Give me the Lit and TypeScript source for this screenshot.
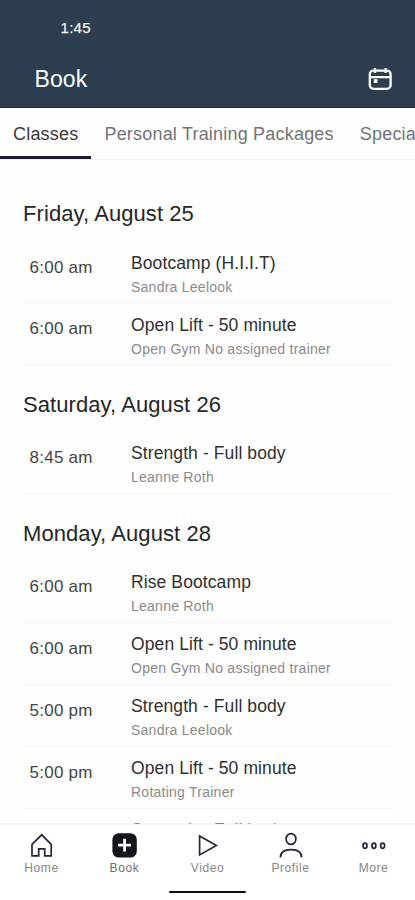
import { LitElement, html, css, svg } from "lit";
import { customElement, property } from "lit/decorators.js";
import { classMap } from "lit/directives/class-map.js";

type Row = { time: string; title: string; who: string };
type Day = { label: string; rows: Row[] };

const days: Day[] = [
  {
    label: "Friday, August 25",
    rows: [
      { time: "6:00 am", title: "Bootcamp (H.I.I.T)", who: "Sandra Leelook" },
      { time: "6:00 am", title: "Open Lift - 50 minute", who: "Open Gym No assigned trainer" },
    ],
  },
  {
    label: "Saturday, August 26",
    rows: [{ time: "8:45 am", title: "Strength - Full body", who: "Leanne Roth" }],
  },
  {
    label: "Monday, August 28",
    rows: [
      { time: "6:00 am", title: "Rise Bootcamp", who: "Leanne Roth" },
      { time: "6:00 am", title: "Open Lift - 50 minute", who: "Open Gym No assigned trainer" },
      { time: "5:00 pm", title: "Strength - Full body", who: "Sandra Leelook" },
      { time: "5:00 pm", title: "Open Lift - 50 minute", who: "Rotating Trainer" },
      { time: "", title: "Strength - Full body", who: "" },
    ],
  },
];

const icons = {
  Home: svg`<path d="M4 12.4 13.7 2.8 23.2 12.4V23.8H16.7V16.8H10.7V23.8H4Z"/>`,
  Book: svg`<rect class="solid" x="1.4" y="1.2" width="24.4" height="24.4" rx="6.4"/><path class="plus" d="M13.6 6.8V19.6M7.2 13.2H20"/>`,
  Video: svg`<path d="M5.6 3.9V22.9L22.4 13.4Z"/>`,
  Profile: svg`<ellipse cx="14" cy="7" rx="4.9" ry="5.4"/><path d="M3.4 25.4C3.4 19.8 7.6 17.6 14 17.6S24.6 19.8 24.6 25.4"/>`,
  More: svg`<ellipse cx="5" cy="13.8" rx="2" ry="2.6"/><ellipse cx="13.9" cy="13.8" rx="2" ry="2.6"/><ellipse cx="22.6" cy="13.8" rx="2" ry="2.6"/>`,
};

@customElement("class-row")
class ClassRow extends LitElement {
  @property({ attribute: false }) row!: Row;
  static styles = css`
    :host {
      display: grid;
      grid-template-columns: 108px 1fr;
      height: 61.95px;
      box-sizing: border-box;
      border-bottom: 1px solid #f4f4f4;
      white-space: nowrap;
    }
    .time {
      padding: 16.5px 0 0 6.5px;
      font-size: 17px;
      line-height: 20px;
      letter-spacing: 0.25px;
      color: #444;
    }
    .title {
      padding-top: 11.62px;
      font-size: 17.5px;
      line-height: 20px;
      letter-spacing: 0.1px;
      color: #303030;
    }
    .who {
      padding-top: 5px;
      font-size: 14px;
      line-height: 18px;
      letter-spacing: 0.25px;
      color: #8a8a8a;
    }
  `;
  render() {
    return html`<div class="time">${this.row.time}</div>
      <div>
        <div class="title">${this.row.title}</div>
        <div class="who">${this.row.who}</div>
      </div>`;
  }
}

@customElement("app-root")
class AppRoot extends LitElement {
  static styles = css`
    :host {
      display: flex;
      flex-direction: column;
      height: 900px;
      overflow: hidden;
      background: #fefefe;
      font-family: "Liberation Sans", Arial, sans-serif;
      white-space: nowrap;
    }
    svg {
      display: block;
      fill: none;
    }
    header {
      flex: none;
      height: 108px;
      box-sizing: border-box;
      background: #2c3e50;
      border-bottom: 1px solid #1c3045;
      color: #fff;
    }
    .status {
      padding: 19px 0 0 60.5px;
      font-size: 15px;
      line-height: 18px;
      letter-spacing: 0.3px;
      color: #f0f2f4;
      -webkit-text-stroke: 0.25px #f0f2f4;
    }
    .bar {
      display: flex;
      justify-content: space-between;
      align-items: center;
      height: 30px;
      padding: 27px 22px 0 34.5px;
    }
    .name {
      font-size: 23px;
      letter-spacing: 0.1px;
    }
    .cal {
      stroke: #fff;
      stroke-width: 2.3;
    }
    .dot {
      fill: #fff;
      stroke: none;
    }
    .tabs {
      flex: none;
      display: flex;
      height: 52px;
      box-sizing: border-box;
      border-bottom: 1px solid #f1f1f1;
      overflow: hidden;
    }
    .tab {
      flex: none;
      height: 51px;
      box-sizing: border-box;
      padding: 0 13px;
      font-size: 18px;
      line-height: 52px;
      letter-spacing: 0.2px;
      color: #737376;
    }
    .active {
      color: #3a3a3a;
      border-bottom: 3px solid #1c1b33;
    }
    main {
      flex: 1;
      min-height: 0;
      overflow: hidden;
      padding: 14px 23px 0;
    }
    .day {
      height: 67px;
      box-sizing: border-box;
      padding-top: 27px;
      font-size: 22px;
      line-height: 26px;
      letter-spacing: 0.08px;
      color: #262626;
    }
    nav {
      position: relative;
      flex: none;
      display: grid;
      grid-template-columns: repeat(5, 1fr);
      height: 66px;
      margin-top: -1px;
      box-sizing: border-box;
      padding-top: 8px;
      border-top: 1px solid rgba(235, 235, 235, 0.45);
      background: #fff;
      background-clip: padding-box;
      box-shadow: inset 0 1px #f5f5f5;
    }
    .item {
      display: flex;
      flex-direction: column;
      align-items: center;
      gap: 2px;
      font-size: 12px;
      line-height: 14px;
      letter-spacing: 0.6px;
      color: #868686;
    }
    .item svg {
      stroke: #26263a;
      stroke-width: 1.7;
    }
    .current {
      color: #707070;
    }
    .item .solid {
      fill: #15161c;
      stroke: none;
    }
    .item .plus {
      stroke: #fff;
      stroke-width: 2.8;
    }
    .home {
      flex: none;
      display: flex;
      justify-content: center;
      height: 11px;
      background: #fff;
    }
    .home::after {
      content: "";
      width: 77px;
      height: 2px;
      margin-top: 2px;
      border-radius: 1px;
      background: #111;
    }
  `;

  render() {
    return html`
      <header>
        <div class="status">1:45</div>
        <div class="bar">
          <span class="name">Book</span>
          <svg class="cal" width="26" height="26" viewBox="0 0 26 26">
            <rect x="2.8" y="4.6" width="20.8" height="18.2" rx="3.6" />
            <path d="M2.8 11.2H23.6M8 2V7M18.6 2V7" />
            <rect class="dot" x="6.8" y="13.2" width="3.6" height="3.8" />
          </svg>
        </div>
      </header>
      <div class="tabs">
        <div class="tab active">Classes</div>
        <div class="tab">Personal Training Packages</div>
        <div class="tab">Specials</div>
      </div>
      <main>
        ${days.map(
          (d) => html`<section>
            <div class="day">${d.label}</div>
            ${d.rows.map((r) => html`<class-row .row=${r}></class-row>`)}
          </section>`
        )}
      </main>
      <nav>
        ${Object.entries(icons).map(
          ([label, icon]) => html`<div class=${classMap({ item: true, current: label === "Book" })}>
            <svg width="27" height="27" viewBox="0 0 27 27">${icon}</svg>
            <span>${label}</span>
          </div>`
        )}
      </nav>
      <div class="home"></div>
    `;
  }
}
